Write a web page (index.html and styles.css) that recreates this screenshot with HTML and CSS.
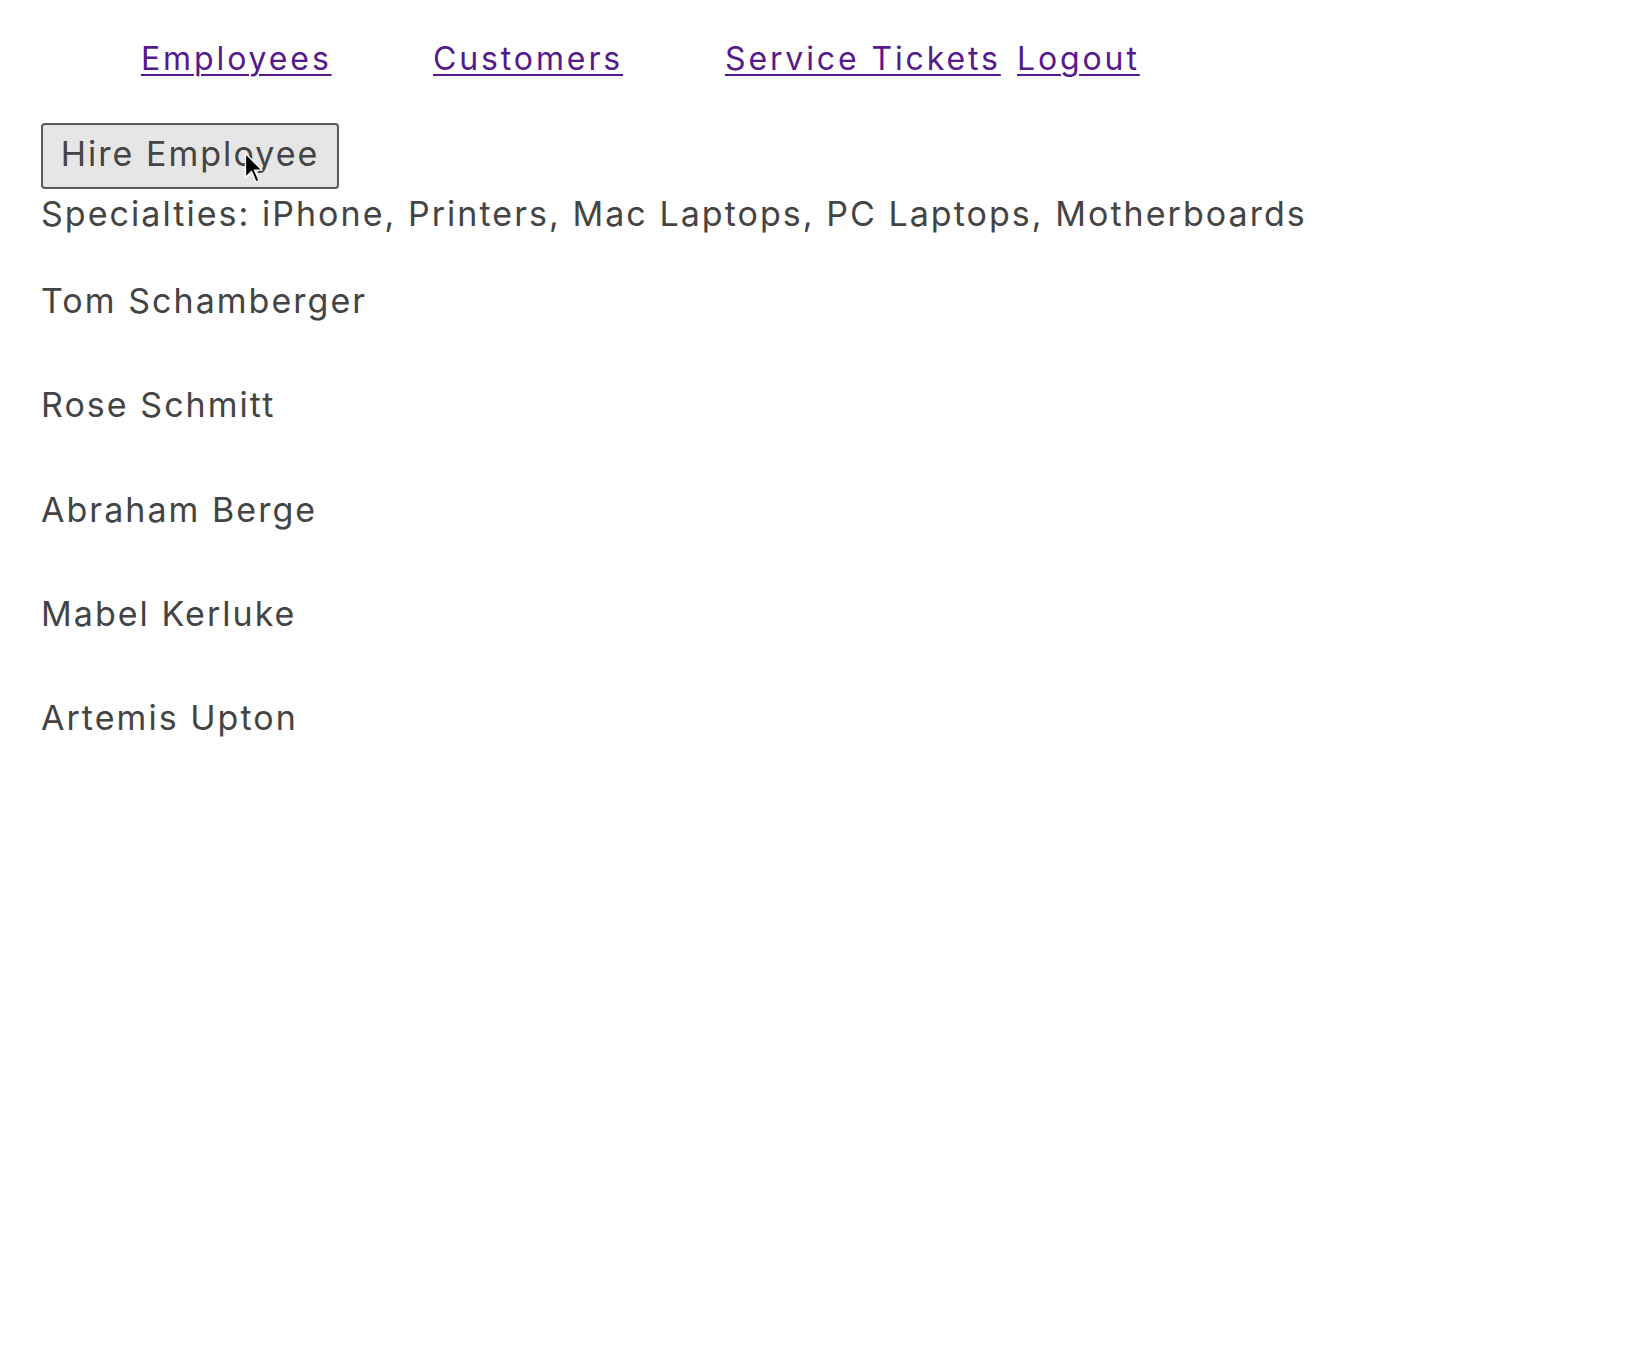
FILE: index.html
```html
<!DOCTYPE html>
<html lang="en">
<head>
<meta charset="utf-8">
<title>Employees</title>
<link rel="stylesheet" href="styles.css">
</head>
<body>
<nav class="navbar">
  <ul class="nav-list">
    <li class="nav-item"><a class="nav-link" href="#employees">Employees</a></li>
    <li class="nav-item"><a class="nav-link" href="#customers">Customers</a></li>
    <li class="nav-item"><a class="nav-link" href="#tickets">Service Tickets</a></li>
    <li class="nav-item"><a class="nav-link" href="#logout">Logout</a></li>
  </ul>
</nav>
<main class="content">
  <div class="actions">
    <button class="hire-btn" type="button">Hire Employee</button>
    <svg class="cursor" width="20" height="31" viewBox="0 0 13.3 20.6" aria-hidden="true">
      <path d="M1 1 L1 17 L5 13 L8 20 L10 19 L7 12 L12 12 Z" fill="#000" stroke="#fff" stroke-width="0.9" stroke-linejoin="round"/>
    </svg>
  </div>
  <p class="specialties">Specialties: iPhone, Printers, Mac Laptops, PC Laptops, Motherboards</p>
  <ul class="employee-list">
    <li class="employee">Tom Schamberger</li>
    <li class="employee">Rose Schmitt</li>
    <li class="employee">Abraham Berge</li>
    <li class="employee">Mabel Kerluke</li>
    <li class="employee">Artemis Upton</li>
  </ul>
</main>
</body>
</html>
```
FILE: styles.css
```css
html, body {
  margin: 0;
  padding: 0;
  background: #ffffff;
}

body {
  font-family: "Inter", "Open Sans", sans-serif;
  color: #444444;
}

.navbar {
  padding: 39px 0 0 141px;
}

.nav-list {
  display: flex;
  list-style: none;
  margin: 0;
  padding: 0;
}

.nav-item {
  width: 292px;
  flex: 0 0 292px;
  font-size: 32px;
  line-height: 40px;
  letter-spacing: 0.09em;
}

.nav-link {
  color: #551a8b;
  text-decoration: underline;
  text-decoration-thickness: 2px;
  text-underline-offset: 4px;
}

.content {
  padding: 44px 0 0 41px;
}

.actions {
  position: relative;
  height: 66px;
}

.hire-btn {
  box-sizing: border-box;
  width: 298px;
  height: 66px;
  padding: 0 0 5px 0;
  margin: 0;
  font-family: "Inter", "Open Sans", sans-serif;
  font-size: 34px;
  letter-spacing: 0.06em;
  color: #444444;
  background: #e6e6e6;
  border: 2px solid #595959;
  border-radius: 4px;
  text-align: center;
}

.cursor {
  position: absolute;
  left: 203px;
  top: 29px;
}

.specialties {
  margin: 5px 0 0 0;
  font-size: 34px;
  line-height: 40px;
  letter-spacing: 0.06em;
  white-space: nowrap;
}

.employee-list {
  list-style: none;
  margin: 47px 0 0 0;
  padding: 0;
  display: flex;
  flex-direction: column;
  gap: 64.3px;
}

.employee {
  font-size: 34px;
  line-height: 40px;
  letter-spacing: 0.06em;
}
```
